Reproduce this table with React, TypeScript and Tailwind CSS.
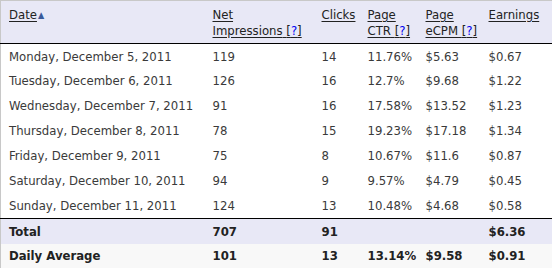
const rows = [
  ['Monday, December 5, 2011', '119', '14', '11.76%', '$5.63', '$0.67'],
  ['Tuesday, December 6, 2011', '126', '16', '12.7%', '$9.68', '$1.22'],
  ['Wednesday, December 7, 2011', '91', '16', '17.58%', '$13.52', '$1.23'],
  ['Thursday, December 8, 2011', '78', '15', '19.23%', '$17.18', '$1.34'],
  ['Friday, December 9, 2011', '75', '8', '10.67%', '$11.6', '$0.87'],
  ['Saturday, December 10, 2011', '94', '9', '9.57%', '$4.79', '$0.45'],
  ['Sunday, December 11, 2011', '124', '13', '10.48%', '$4.68', '$0.58'],
];

function Help() {
  return (
    <>
      {' '}[<span className="text-[#0000ee]">?</span>]
    </>
  );
}

export default function App() {
  const cell = 'pl-2 pr-1 h-[25px] align-middle whitespace-nowrap';
  return (
    <div className="w-[552px] h-[268px] bg-white overflow-hidden font-['DejaVu_Sans_Condensed','DejaVu_Sans',sans-serif] text-[13px] text-[#3a3a3a]">
      <table className="w-[552px] table-fixed border-collapse border-x border-t border-[#c8c8c8]">
        <colgroup>
          <col className="w-[204px]" />
          <col className="w-[109px]" />
          <col className="w-[46px]" />
          <col className="w-[58px]" />
          <col className="w-[63px]" />
          <col className="w-[72px]" />
        </colgroup>
        <thead>
          <tr className="bg-[#e8e8f6] border-b border-black text-left leading-4 text-[#222]">
            <th className="pl-2 pt-[6px] h-[43px] align-top font-normal">
              <span className="underline underline-offset-2">Date</span>
              <span className="text-[#3a5a9a] text-[9px] align-[1px] ml-px">▲</span>
            </th>
            <th className="pl-2 pt-[6px] align-top font-normal">
              <span className="underline underline-offset-2">Net<br />Impressions<Help /></span>
            </th>
            <th className="pl-2 pt-[6px] align-top font-normal">
              <span className="underline underline-offset-2">Clicks</span>
            </th>
            <th className="pl-2 pt-[6px] align-top font-normal">
              <span className="underline underline-offset-2">Page<br />CTR<Help /></span>
            </th>
            <th className="pl-2 pt-[6px] align-top font-normal">
              <span className="underline underline-offset-2">Page<br />eCPM<Help /></span>
            </th>
            <th className="pl-2 pt-[6px] align-top font-normal">
              <span className="underline underline-offset-2">Earnings</span>
            </th>
          </tr>
        </thead>
        <tbody>
          {rows.map((r) => (
            <tr key={r[0]}>
              {r.map((v, i) => (
                <td key={i} className={cell}>{v}</td>
              ))}
            </tr>
          ))}
          <tr className="bg-[#e8e8f6] border-t border-black font-bold text-[#222]">
            <td className={cell}>Total</td>
            <td className={cell}>707</td>
            <td className={cell}>91</td>
            <td className={cell}></td>
            <td className={cell}></td>
            <td className={cell}>$6.36</td>
          </tr>
          <tr className="bg-[#f8f8f8] font-bold text-[#222]">
            <td className={cell}>Daily Average</td>
            <td className={cell}>101</td>
            <td className={cell}>13</td>
            <td className={cell}>13.14%</td>
            <td className={cell}>$9.58</td>
            <td className={cell}>$0.91</td>
          </tr>
        </tbody>
      </table>
    </div>
  );
}
